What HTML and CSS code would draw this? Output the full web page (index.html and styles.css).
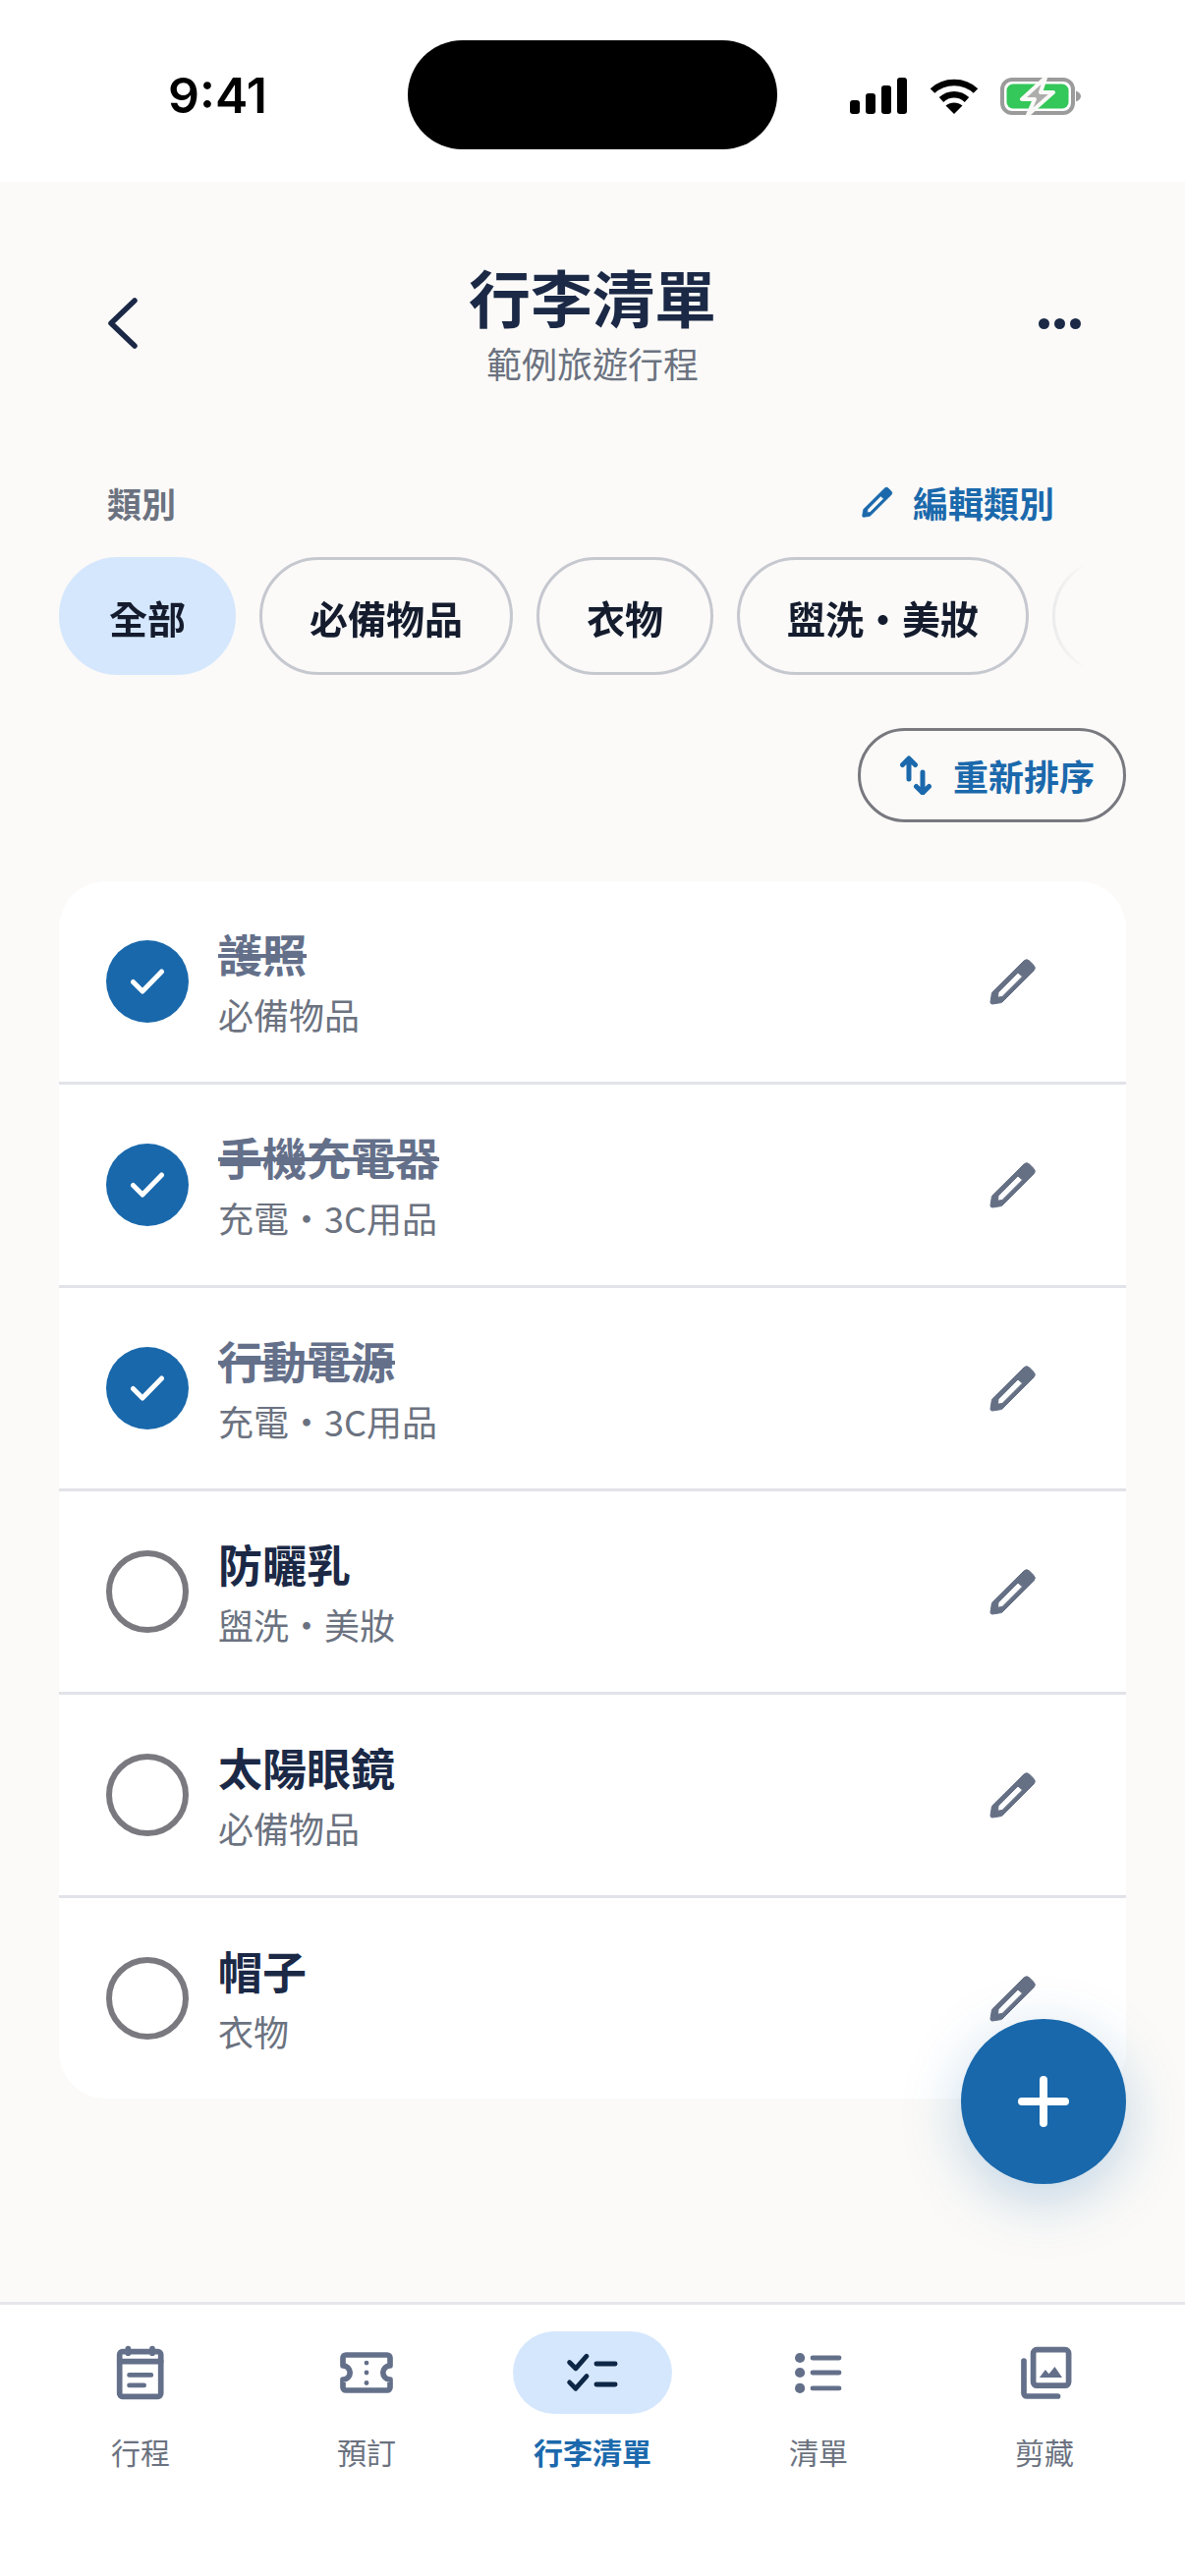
FILE: index.html
```html
<!DOCTYPE html>
<html lang="zh-Hant">
<head>
    <meta charset="UTF-8">
    <title>行李清單</title>
    <link rel="stylesheet" href="styles.css">
</head>
<body>
<svg class="defs" width="0" height="0">
    <symbol id="pencil" viewBox="0 0 48 48">
        <path fill-rule="evenodd" d="M35 3a4 4 0 0 1 5.600 0l4.400 4.400a4 4 0 0 1 0 5.600L13 45a2 2 0 0 1-1.200.6L3 47a2 2 0 0 1-2-2l1.400-9a2 2 0 0 1 .6-1.200ZM29 15l4.500 4L13 39.500l-4.500.7.5-5Z"/>
    </symbol>
    <symbol id="tick" viewBox="0 0 34 26">
        <path d="M2.500 13.500 12 23 31.500 3" fill="none" stroke="#fff" stroke-width="5" stroke-linecap="round" stroke-linejoin="round"/>
    </symbol>
</svg>

<div class="status_bar">
    <span class="status_time">9:41</span>
    <div class="island"></div>
    <div class="status_icons">
        <svg class="signal" viewBox="0 0 58 37">
            <rect x="0" y="23" width="10" height="14" rx="3"/>
            <rect x="16" y="16" width="10" height="21" rx="3"/>
            <rect x="32" y="8" width="10" height="29" rx="3"/>
            <rect x="48" y="0" width="10" height="37" rx="3"/>
        </svg>
        <svg class="wifi" viewBox="0 0 50 37">
            <path d="M3 13.500C15 2 35 2 47 13.500" fill="none" stroke="#000" stroke-width="6.500"/>
            <path d="M12 22.500C19.500 15.500 30.500 15.500 38 22.500" fill="none" stroke="#000" stroke-width="6.500"/>
            <path d="M25 37 16.500 28.500C21.500 24.500 28.500 24.500 33.500 28.500Z"/>
        </svg>
        <svg class="battery" viewBox="0 0 82 40">
            <rect x="2" y="3" width="72" height="34" rx="10" fill="none" stroke="#9b9b9b" stroke-width="4"/>
            <rect x="6.500" y="7.500" width="63" height="25" rx="6.500" fill="#34c759"/>
            <path d="M77 14.500c3 1 5 3 5 5.500s-2 4.500-5 5.500Z" fill="#9b9b9b"/>
            <path d="M46 1 22 23h13l-7 16 26-23H41Z" fill="#adadad" stroke="#fbfaf8" stroke-width="4" stroke-linejoin="round"/>
        </svg>
    </div>
</div>

<main class="page">
    <header class="top_bar">
        <svg class="back_icon" viewBox="0 0 30 52">
            <path d="M27 3 3 26l24 23" fill="none" stroke-width="5.500" stroke-linecap="round" stroke-linejoin="round"/>
        </svg>
        <div class="top_title">
            <h1>行李清單</h1>
            <p>範例旅遊行程</p>
        </div>
        <div class="more_icon"><i></i><i></i><i></i></div>
    </header>

    <div class="section_head">
        <span class="section_label">類別</span>
        <span class="edit_link"><svg class="edit_icon"><use href="#pencil"/></svg>編輯類別</span>
    </div>

    <div class="chips">
        <span class="chip active">全部</span>
        <span class="chip">必備物品</span>
        <span class="chip">衣物</span>
        <span class="chip">盥洗・美妝</span>
        <span class="chip chip_faded"></span>
    </div>

    <div class="sort_wrap">
        <span class="sort_btn">
            <svg class="sort_icon" viewBox="0 0 32 40">
                <path d="M9 24V3M2.500 9.500 9 3l6.500 6.500M23 17v21M16.500 31.500 23 38l6.500-6.500" fill="none" stroke-width="5" stroke-linecap="round" stroke-linejoin="round"/>
            </svg>重新排序
        </span>
    </div>

    <ul class="pack_list">
        <li class="pack_row done">
            <span class="check"><svg class="tick"><use href="#tick"/></svg></span>
            <div class="pack_text"><strong>護照</strong><small>必備物品</small></div>
            <svg class="row_pencil"><use href="#pencil"/></svg>
        </li>
        <li class="pack_row done">
            <span class="check"><svg class="tick"><use href="#tick"/></svg></span>
            <div class="pack_text"><strong>手機充電器</strong><small>充電・3C用品</small></div>
            <svg class="row_pencil"><use href="#pencil"/></svg>
        </li>
        <li class="pack_row done">
            <span class="check"><svg class="tick"><use href="#tick"/></svg></span>
            <div class="pack_text"><strong>行動電源</strong><small>充電・3C用品</small></div>
            <svg class="row_pencil"><use href="#pencil"/></svg>
        </li>
        <li class="pack_row">
            <span class="check"></span>
            <div class="pack_text"><strong>防曬乳</strong><small>盥洗・美妝</small></div>
            <svg class="row_pencil"><use href="#pencil"/></svg>
        </li>
        <li class="pack_row">
            <span class="check"></span>
            <div class="pack_text"><strong>太陽眼鏡</strong><small>必備物品</small></div>
            <svg class="row_pencil"><use href="#pencil"/></svg>
        </li>
        <li class="pack_row">
            <span class="check"></span>
            <div class="pack_text"><strong>帽子</strong><small>衣物</small></div>
            <svg class="row_pencil"><use href="#pencil"/></svg>
        </li>
    </ul>

    <span class="fab">
        <svg class="fab_icon" viewBox="0 0 52 52">
            <path d="M26 4v44M4 26h44" fill="none" stroke="#fff" stroke-width="8" stroke-linecap="round"/>
        </svg>
    </span>
</main>

<nav class="tab_bar">
    <div class="tab">
        <span class="tab_icon">
            <svg viewBox="0 0 24 24">
                <rect x="4.900" y="4.900" width="14" height="15.200" rx="1"/>
                <path d="M4.900 8.200h14M7.800 3.900v1.500M16 3.900v1.500"/>
                <path class="thin" d="M8.200 12.800h7.400M8.200 16.300h5"/>
            </svg>
        </span>
        <span class="tab_label">行程</span>
    </div>
    <div class="tab">
        <span class="tab_icon">
            <svg viewBox="0 0 24 24">
                <path d="M5 6H19a1 1 0 0 1 1 1V9.600a2.400 2.400 0 0 0 0 4.800V17a1 1 0 0 1-1 1H5a1 1 0 0 1-1-1V14.400a2.400 2.400 0 0 0 0-4.800V7a1 1 0 0 1 1-1Z"/>
                <circle class="solid" cx="12" cy="8.700" r=".8"/>
                <circle class="solid" cx="12" cy="12" r=".8"/>
                <circle class="solid" cx="12" cy="15.500" r=".8"/>
            </svg>
        </span>
        <span class="tab_label">預訂</span>
    </div>
    <div class="tab active">
        <span class="tab_icon">
            <svg viewBox="0 0 24 24">
                <path class="thin" d="M4.200 8.500 6.300 10.600 10 6.400M4.200 15.300 6.300 17.400 10 13.200M13.300 9h6.400M13.300 16h6.400"/>
            </svg>
        </span>
        <span class="tab_label">行李清單</span>
    </div>
    <div class="tab">
        <span class="tab_icon">
            <svg viewBox="0 0 24 24">
                <circle class="solid" cx="5.700" cy="7" r="1.700"/>
                <circle class="solid" cx="5.700" cy="12" r="1.700"/>
                <circle class="solid" cx="5.700" cy="17.300" r="1.700"/>
                <path class="thin" d="M10 7h9M10 12h9M10 17.300h9"/>
            </svg>
        </span>
        <span class="tab_label">清單</span>
    </div>
    <div class="tab">
        <span class="tab_icon">
            <svg viewBox="0 0 24 24">
                <rect x="8.200" y="4.200" width="12" height="12.200" rx="1.200"/>
                <path d="M5 8V19a1 1 0 0 0 1 1H16.500"/>
                <path class="solid" d="M10.300 13.700 12.300 11 13.500 12.400 15.500 10 18 13.700Z"/>
            </svg>
        </span>
        <span class="tab_label">剪藏</span>
    </div>
</nav>
</body>
</html>
```

FILE: styles.css
```css
* {
    padding: 0;
    margin: 0;
    box-sizing: border-box;
}

body {
    width: 1206px;
    height: 2622px;
    display: flex;
    flex-direction: column;
    overflow: hidden;
    background: #fff;
    color: #1b2946;
    font-family: "Noto Sans CJK TC", "Noto Sans", sans-serif;
}

.defs {
    display: block;
    height: 0;
}

/* status bar */
.status_bar {
    height: 185px;
    flex: none;
    display: flex;
    align-items: flex-start;
    background: #fff;
}
.status_time {
    width: 415px;
    padding-top: 67px;
    text-align: center;
    padding-left: 28px;
    font-family: Inter, sans-serif;
    font-size: 50px;
    line-height: 60px;
    font-weight: 600;
    color: #000;
}
.island {
    width: 376px;
    height: 111px;
    margin-top: 41px;
    border-radius: 56px;
    background: #000;
}
.status_icons {
    display: flex;
    align-items: center;
    margin: 78px 0 0 74px;
    height: 39px;
}
.signal {
    width: 58px;
    height: 37px;
}
.wifi {
    width: 50px;
    height: 37px;
    margin-left: 23px;
}
.battery {
    width: 82px;
    height: 40px;
    margin-left: 22px;
}

/* main */
.page {
    position: relative;
    flex: 1;
    background: #fbfaf8;
}

.top_bar {
    display: grid;
    grid-template-columns: 1fr auto 1fr;
    align-items: center;
    height: 168px;
    padding: 0 106px;
    margin-top: 53px;
}
.back_icon {
    width: 30px;
    height: 52px;
    stroke: #1b2946;
    margin: 14px 0 0 4px;
}
.top_title {
    text-align: center;
    padding-top: 14px;
}
.top_title h1 {
    font-size: 63px;
    line-height: 72px;
    font-weight: 700;
    color: #1b2946;
}
.top_title p {
    font-size: 36px;
    line-height: 48px;
    margin-top: 8px;
    color: #6b7280;
}
.more_icon {
    display: flex;
    justify-content: flex-end;
    gap: 5px;
    margin-top: 14px;
}
.more_icon i {
    width: 11px;
    height: 11px;
    border-radius: 50%;
    background: #1b2946;
}

.section_head {
    display: flex;
    justify-content: space-between;
    align-items: center;
    padding: 0 133px 0 109px;
    margin-top: 80px;
    height: 50px;
}
.section_label {
    font-size: 35px;
    font-weight: 700;
    color: #6b7280;
}
.edit_link {
    display: flex;
    align-items: center;
    gap: 20px;
    font-size: 36px;
    font-weight: 700;
    color: #1b69ac;
}
.edit_icon {
    width: 32px;
    height: 32px;
    fill: #1b69ac;
    stroke: #1b69ac;
    stroke-width: 1;
}

.chips {
    display: flex;
    gap: 24px;
    margin-top: 31px;
    padding-left: 60px;
    overflow: hidden;
    -webkit-mask-image: linear-gradient(to right, #000 1045px, rgba(0, 0, 0, .3) 1071px, transparent 1105px);
    mask-image: linear-gradient(to right, #000 1045px, rgba(0, 0, 0, .3) 1071px, transparent 1105px);
}
.chip {
    flex: none;
    height: 120px;
    display: flex;
    align-items: center;
    padding: 2px 48px 0;
    border: 3px solid #c6c8d0;
    border-radius: 60px;
    font-size: 39px;
    font-weight: 700;
    color: #141c2e;
}
.chip.active {
    background: #d5e7fd;
    border-color: #d5e7fd;
}
.chip_faded {
    width: 240px;
}

.sort_wrap {
    display: flex;
    justify-content: flex-end;
    padding-right: 60px;
    margin-top: 54px;
}
.sort_btn {
    height: 96px;
    display: flex;
    align-items: center;
    gap: 22px;
    padding: 0 29px 0 40px;
    border: 3px solid #78797e;
    border-radius: 48px;
    font-size: 36px;
    font-weight: 700;
    color: #1b69ac;
}
.sort_icon {
    width: 32px;
    height: 40px;
    stroke: #1b69ac;
}

.pack_list {
    list-style: none;
    margin: 60px 60px 0;
    background: #fff;
    border-radius: 48px;
}
.pack_row {
    height: 207px;
    display: flex;
    align-items: center;
    padding: 0 91px 0 48px;
    border-bottom: 3px solid #e2e3e8;
}
.pack_row:last-child {
    height: 204px;
    border-bottom: 0;
}
.check {
    width: 84px;
    height: 84px;
    flex: none;
    display: flex;
    align-items: center;
    justify-content: center;
    border: 6px solid #79797f;
    border-radius: 50%;
}
.done .check {
    background: #1968ab;
    border: 0;
}
.tick {
    width: 34px;
    height: 26px;
}
.pack_text {
    flex: 1;
    margin-left: 30px;
    display: flex;
    flex-direction: column;
    padding-bottom: 1px;
}
.pack_text strong {
    font-size: 45px;
    line-height: 60px;
    font-weight: 700;
}
.pack_text small {
    font-size: 36px;
    line-height: 50px;
    margin-top: 6px;
    color: #6b7280;
}
.done strong {
    color: #64708a;
    text-decoration: line-through;
    text-decoration-thickness: 4px;
}
.row_pencil {
    width: 48px;
    height: 48px;
    flex: none;
    fill: #667085;
    stroke: #667085;
    stroke-width: 1;
}

.fab {
    position: absolute;
    right: 60px;
    top: 1870px;
    width: 168px;
    height: 168px;
    display: flex;
    align-items: center;
    justify-content: center;
    border-radius: 50%;
    background: #1968ab;
    box-shadow: 0 16px 60px rgba(25, 104, 171, .26);
}
.fab_icon {
    width: 52px;
    height: 52px;
}

/* bottom tabs */
.tab_bar {
    flex: none;
    height: 279px;
    display: grid;
    grid-template-columns: repeat(5, 1fr);
    padding: 27px 28px 0;
    border-top: 3px solid #e5e7eb;
    background: #fff;
}
.tab {
    display: flex;
    flex-direction: column;
    align-items: center;
}
.tab_icon {
    width: 162px;
    height: 84px;
    display: flex;
    align-items: center;
    justify-content: center;
    border-radius: 42px;
}
.tab_icon svg {
    width: 72px;
    height: 72px;
    fill: none;
    stroke: #64708a;
    stroke-width: 1.9;
    stroke-linecap: round;
    stroke-linejoin: round;
}
.tab_icon .thin {
    stroke-width: 1.6;
}
.tab_icon .solid {
    fill: #64708a;
    stroke: none;
}
.tab_label {
    margin-top: 16px;
    font-size: 30px;
    line-height: 44px;
    color: #6b7280;
}
.tab.active .tab_icon {
    background: #d5e7fd;
}
.tab.active .tab_icon svg {
    stroke: #0e2746;
}
.tab.active .tab_label {
    font-weight: 700;
    color: #1b69ac;
}
```
